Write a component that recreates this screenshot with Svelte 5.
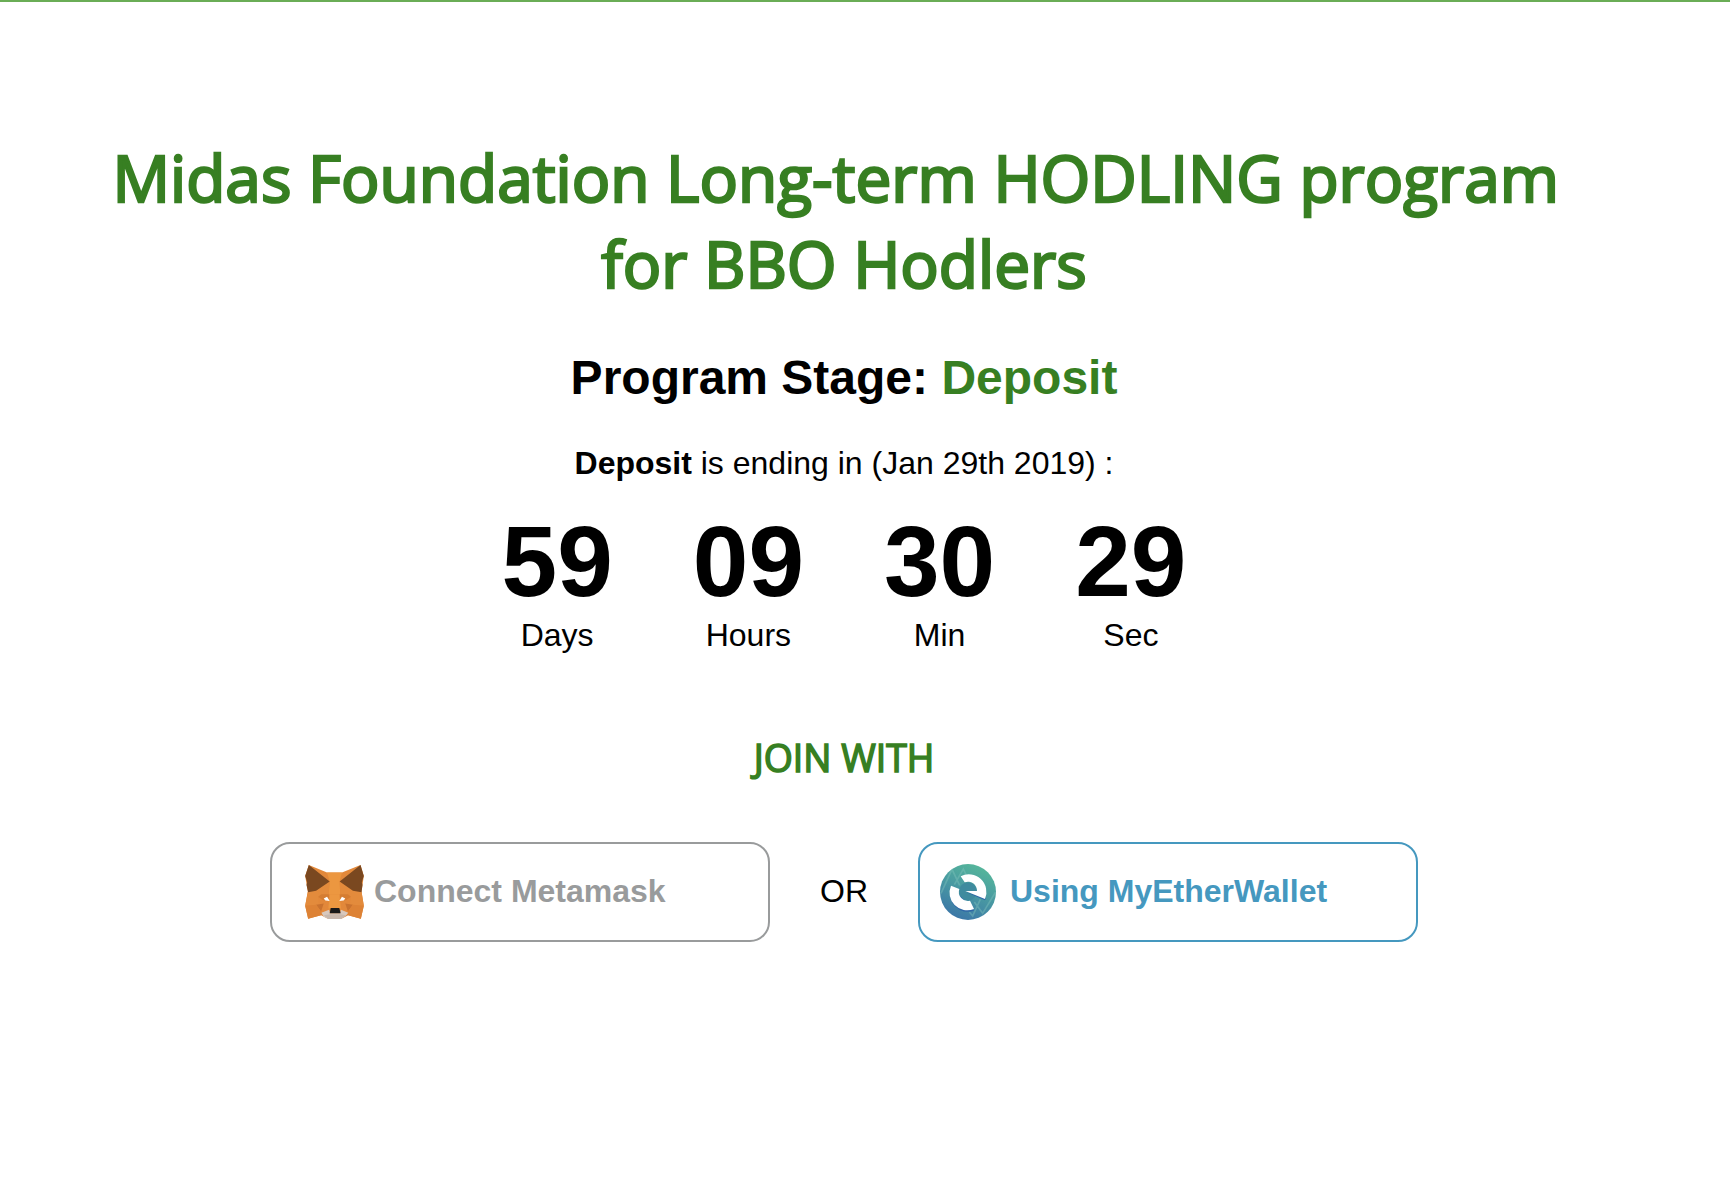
<script>
  const countdown = [
    { value: '59', label: 'Days' },
    { value: '09', label: 'Hours' },
    { value: '30', label: 'Min' },
    { value: '29', label: 'Sec' }
  ];
</script>

<main>
  <h1>Midas Foundation Long-term HODLING program&nbsp;<br />for BBO Hodlers</h1>
  <h2>Program Stage: <span>Deposit</span></h2>
  <p class="ending"><b>Deposit</b> is ending in (Jan 29th 2019) :</p>

  <div class="countdown">
    {#each countdown as unit}
      <div class="unit">
        <strong>{unit.value}</strong>
        <span>{unit.label}</span>
      </div>
    {/each}
  </div>

  <h3>JOIN WITH</h3>

  <div class="choices">
    <button class="metamask">
      <svg viewBox="47 44 177 163" aria-hidden="true">
        <path fill="#e2883a" d="M58 44 113 67H158L214 44 224 77 217 124 224 167 215 206 177 196 155 207H117L95 196 56 206 47 167 55 124 47 77Z" />
        <path fill="#ec9740" d="M113 67H158L151 94 153 132H118L121 94Z" />
        <path fill="#e38b3c" d="M55 125 121 94 118 132 86 140 88 164 47 167ZM217 125 151 94 153 132 185 140 183 164 224 167Z" />
        <path fill="#7a4820" d="M58 44 121 94 80 122 56 126 51 104 53 96 47 77ZM214 44 151 94 191 122 217 126 220 104 218 96 224 77Z" />
        <path fill="#d57d32" d="M86 140 96 132H118L122 152 100 150ZM185 140 176 132H153L149 152 171 150Z" />
        <path fill="#c9722f" d="M80 164 103 160 95 184ZM191 164 168 160 176 184Z" />
        <path fill="#dd8235" d="M47 167 80 164 95 184 100 194 56 206ZM224 167 191 164 176 184 171 194 215 206Z" />
        <path fill="#ec9740" d="M121 132H150L155 175H117Z" />
        <path fill="#d8c8bd" d="M96 188 119 179 122 190H152L155 179 177 188 171 196 155 207H117L103 200Z" />
        <path fill="#c8b8ad" d="M103 196 122 193H152L171 196 155 207H117Z" />
        <path fill="#fff" d="M103 145 113 140 121 153 108 151ZM168 145 158 140 150 153 163 151Z" />
        <path fill="#191919" d="M124 174H150L154 190H121Z" />
      </svg>
      <span>Connect Metamask</span>
    </button>
    <span class="or">OR</span>
    <button class="mew">
      <svg viewBox="45 42 168 168" aria-hidden="true">
        <defs>
          <linearGradient id="disc" x1="0.7" y1="0.05" x2="0.3" y2="0.95">
            <stop offset="0" stop-color="#55b59b" />
            <stop offset="0.5" stop-color="#4898a2" />
            <stop offset="1" stop-color="#3c78a7" />
          </linearGradient>
          <clipPath id="round"><circle cx="129" cy="126" r="84" /></clipPath>
        </defs>
        <circle cx="129" cy="126" r="84" fill="url(#disc)" />
        <circle cx="129" cy="124" r="27" fill="#3f8b9e" />
        <g clip-path="url(#round)" fill="none" stroke="#85c5bf" stroke-opacity="0.4" stroke-width="5">
          <path d="M48 130 81 58 104 106M88 104 115 57 130 88M133 186 143 198 166 148M148 156 173 190 212 126" />
        </g>
        <path fill="#2f67a6" d="M79 113A53 53 0 0 0 147 182L143 174ZM124 127 180 151 183 143Z" />
        <path fill="#fff" d="M107 79A53 53 0 0 1 180 147L121 123H156A27 27 0 0 0 119 97Z" />
        <path fill="#fff" d="M78 107 103 117A27 27 0 0 0 135 152L147 177A53 53 0 0 1 78 107Z" />
      </svg>
      <span>Using MyEtherWallet</span>
    </button>
  </div>
</main>

<style>
  :global(body) {
    margin: 0;
    background: #fff;
  }

  main {
    box-sizing: border-box;
    min-height: 1186px;
    padding: 133px 42px 0 0;
    border-top: 2px solid #6aad56;
    display: flex;
    flex-direction: column;
    align-items: center;
    color: #000;
    font: 32px/36px 'Liberation Sans', Arial, sans-serif;
  }

  h1,
  h3 {
    margin: 0;
    color: #377f22;
    font-family: 'Open Sans', sans-serif;
    font-weight: 400;
    text-align: center;
    white-space: nowrap;
  }

  h1 {
    font-size: 64px;
    line-height: 86px;
    -webkit-text-stroke: 2.5px #377f22;
  }

  h2 {
    margin: 43px 0 0;
    font-size: 48px;
    line-height: 56px;
  }

  h2 span {
    color: #377f22;
  }

  .ending {
    margin: 39px 0 0;
  }

  .countdown {
    display: flex;
    gap: 80px;
    margin-top: 30px;
  }

  .unit {
    display: flex;
    flex-direction: column;
    align-items: center;
    gap: 6px;
  }

  .unit strong {
    font-size: 100px;
    line-height: 100px;
  }

  h3 {
    margin-top: 79px;
    font-size: 37.44px;
    line-height: 52px;
    -webkit-text-stroke: 1.5px #377f22;
  }

  .choices {
    display: flex;
    align-items: center;
    gap: 50px;
    margin-top: 58px;
  }

  .choices span {
    padding-bottom: 2px;
  }

  button {
    box-sizing: border-box;
    width: 500px;
    height: 100px;
    border: 2px solid currentColor;
    border-radius: 20px;
    background: #fff;
    display: flex;
    align-items: center;
    font: bold 32px/36px 'Liberation Sans', Arial, sans-serif;
  }

  .metamask {
    padding: 0 0 0 33px;
    gap: 10px;
    color: #999b9c;
  }

  .metamask svg {
    width: 59px;
    height: 54px;
  }

  .mew {
    padding: 0 0 0 20px;
    gap: 14px;
    color: #4598bf;
  }

  .mew svg {
    width: 56px;
    height: 56px;
  }
</style>
